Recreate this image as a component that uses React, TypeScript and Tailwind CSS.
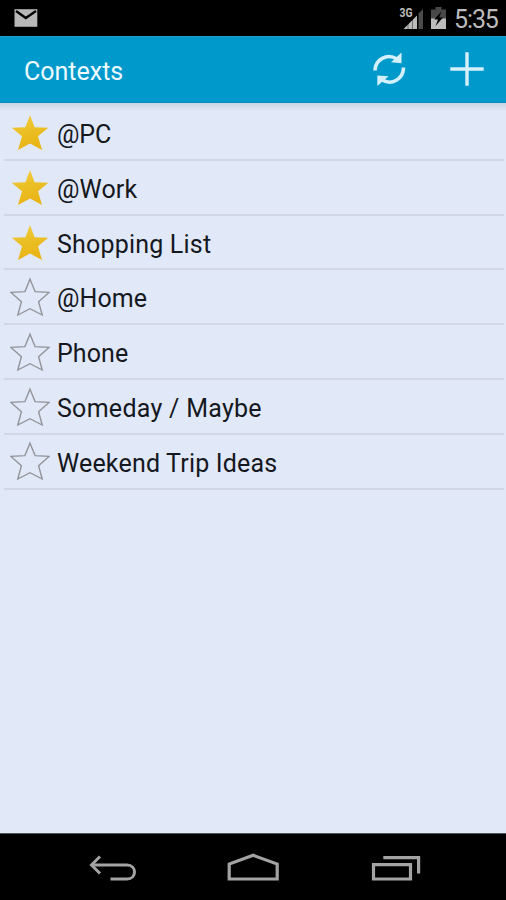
const contexts = [
  { name: "@PC", starred: true, tracking: "tracking-[-0.1px]" },
  { name: "@Work", starred: true, tracking: "tracking-[0.1px]" },
  { name: "Shopping List", starred: true, tracking: "tracking-[0.2px]" },
  { name: "@Home", starred: false, tracking: "tracking-[0.1px]" },
  { name: "Phone", starred: false, tracking: "tracking-[0.1px]" },
  { name: "Someday / Maybe", starred: false, tracking: "tracking-[0.28px]" },
  { name: "Weekend Trip Ideas", starred: false, tracking: "tracking-[0.18px]" },
];

const Star = ({ filled }: { filled: boolean }) => {
  if (filled) {
    return (
      <svg className="mt-0.5 h-10 w-10" viewBox="0 0 40 40">
        <defs>
          <linearGradient id="gold" x1="0" y1="0" x2="0.3" y2="1">
            <stop offset="0" stopColor="#f3d049" />
            <stop offset="0.5" stopColor="#ebc026" />
            <stop offset="1" stopColor="#e9b416" />
          </linearGradient>
        </defs>
        <path
          d="M20 2 L24.6 14.2 L38.3 14.8 L28 23.3 L32 37 L20 30.6 L8 37 L12 23.3 L1.7 14.8 L15.4 14.2 Z"
          fill="url(#gold)"
        />
      </svg>
    );
  }
  return (
    <svg className="h-10 w-10" viewBox="0 0 40 40">
      <path
        d="M20 2.2 L25.1 14.6 L39 15.4 L28.6 24.7 L32.2 38 L20 31.7 L7.8 38 L11.4 24.7 L1 15.4 L14.9 14.6 Z"
        fill="none"
        stroke="#93959b"
        strokeWidth="1.4"
      />
    </svg>
  );
};

const StatusBar = () => {
  return (
    <div className="flex h-9 shrink-0 items-center justify-between bg-black pr-2 pl-3.5">
      <svg className="h-[19px] w-6" viewBox="0 0 24 19">
        <path d="M0.5 0.2 H23.3 V17.8 H0.5 Z" fill="#b8b8b8" />
        <path d="M2 2 L11.8 9 L22 2" fill="none" stroke="#000" strokeWidth="2.4" />
      </svg>
      <div className="flex items-center">
        <svg className="h-6 w-[25px]" viewBox="0 0 25 24">
          <path d="M4.5 23 L18 9.5 V23 Z" fill="#bcbcbc" />
          <path d="M9 15 V23 M13.5 10 V23" stroke="#000" strokeWidth="0.8" opacity="0.5" />
          <path d="M19.5 7.5 L24 3 V23 H19.5 Z" fill="#4b4b4b" />
          <text x="0.5" y="10.8" fontFamily="Roboto" fontSize="12" fontWeight="700" fill="#bebebe" textLength="13" lengthAdjust="spacingAndGlyphs">
            3G
          </text>
        </svg>
        <svg className="ml-1.5 h-6 w-[17px]" viewBox="0 0 17 24">
          <path d="M1 3.5 H5.5 V1 H11.5 V3.5 H16 V13 H1 Z" fill="#484848" />
          <path d="M1 12.5 H16 V23 H1 Z" fill="#bcbcbc" />
          <path d="M11.3 5.5 L4.3 13.5 H8 L5.5 20 L13 11.5 H9.2 Z" fill="#000" />
        </svg>
        <span className="ml-[7px] w-[44px] pt-[3px] text-[25px] leading-[33px] tracking-[-1.1px] whitespace-nowrap text-[#bcbcbc]">5:35</span>
      </div>
    </div>
  );
};

const ActionBar = () => {
  return (
    <div className="flex h-[67px] shrink-0 items-center justify-between border-t border-b border-t-[#22a0cd] border-b-[#078abb] bg-[#0099cc] pr-[21px] pl-6">
      <h1 className="pt-1 text-[25px] leading-8 text-[#eefaff]">Contexts</h1>
      <div className="flex items-center gap-[42px] pb-px">
        <svg className="h-9 w-9" viewBox="0 0 36 36" fill="none" stroke="#d3f0fb" strokeWidth="3.6">
          <path d="M4 19.5 C4 8.5 16 1.8 26 8" />
          <path d="M32.5 16.5 C32.5 28 20.5 35 11 28.8" />
          <path d="M30.5 1.5 V12.3 L20 11.3 Z" fill="#d3f0fb" stroke="none" />
          <path d="M6.3 24.5 V35 L17.6 25.3 Z" fill="#d3f0fb" stroke="none" />
        </svg>
        <svg className="h-9 w-9" viewBox="0 0 36 36" stroke="#d3f0fb" strokeWidth="3.4">
          <path d="M1.3 18 H34.7 M18 1.3 V34.7" />
        </svg>
      </div>
    </div>
  );
};

const NavBar = () => {
  return (
    <div className="flex h-[67px] shrink-0 items-center justify-between border-t border-[#55565c] bg-black pt-1 pr-[84px] pl-[87px]">
      <svg className="h-8 w-[50px]" viewBox="0 0 50 32" fill="none" stroke="#a3a3a3" strokeWidth="3">
        <path d="M13 3.5 L4.5 12 L13 20.5" />
        <path d="M4.5 12 H40 C50 12 50 26 40 26 H23.5" />
      </svg>
      <svg className="h-8 w-[54px]" viewBox="0 0 54 32" fill="none" stroke="#a3a3a3" strokeWidth="3.2">
        <path d="M2.2 26 V11 L26.2 2.3 L50.2 11 V26 Z" />
      </svg>
      <svg className="h-8 w-[51px]" viewBox="0 0 51 32" fill="none" stroke="#a3a3a3" strokeWidth="3.2">
        <path d="M2.5 11.6 H39.5 V26 H2.5 Z" />
        <path d="M12.3 4.7 H47.6 V20.5" />
      </svg>
    </div>
  );
};

const App = () => {
  return (
    <div className="flex h-[900px] w-[506px] flex-col overflow-hidden bg-[#e1e8f8] font-[Roboto,sans-serif]">
      <StatusBar />
      <ActionBar />
      <div className="h-2 shrink-0 bg-linear-to-b from-[#c6d5e1] to-[#e1e8f8]" />
      <ul className="-mt-[5px] mr-0.5 ml-1 flex-1">
        {contexts.map((item) => (
          <li key={item.name} className="flex h-[54.83px] items-center border-b-2 border-[#d1d7e5] pl-1.5">
            <Star filled={item.starred} />
            <span className={`ml-[7px] pt-[5px] text-[25px] leading-8 whitespace-nowrap text-[#15181e] ${item.tracking}`}>
              {item.name}
            </span>
          </li>
        ))}
      </ul>
      <NavBar />
    </div>
  );
};

export default App;
